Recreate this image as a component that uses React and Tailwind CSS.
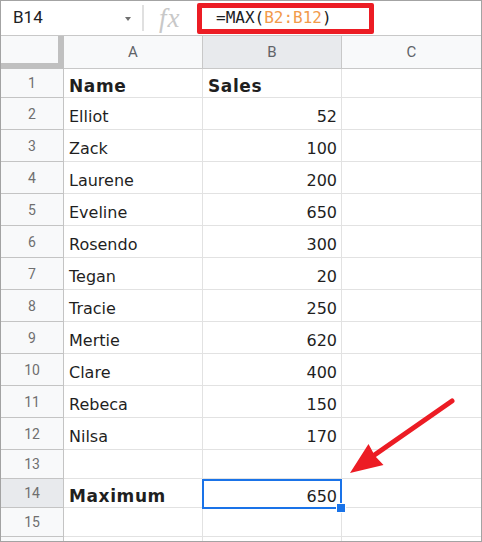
import React from 'react';

const rows = [
  { n: 1, a: 'Name', b: 'Sales', bold: true, h: 'h-[29px]' },
  { n: 2, a: 'Elliot', b: '52', h: 'h-[32px]' },
  { n: 3, a: 'Zack', b: '100', h: 'h-[32px]' },
  { n: 4, a: 'Laurene', b: '200', h: 'h-[32px]' },
  { n: 5, a: 'Eveline', b: '650', h: 'h-[32px]' },
  { n: 6, a: 'Rosendo', b: '300', h: 'h-[32px]' },
  { n: 7, a: 'Tegan', b: '20', h: 'h-[32px]' },
  { n: 8, a: 'Tracie', b: '250', h: 'h-[32px]' },
  { n: 9, a: 'Mertie', b: '620', h: 'h-[32px]' },
  { n: 10, a: 'Clare', b: '400', h: 'h-[32px]' },
  { n: 11, a: 'Rebeca', b: '150', h: 'h-[32px]' },
  { n: 12, a: 'Nilsa', b: '170', h: 'h-[32px]' },
  { n: 13, a: '', b: '', h: 'h-[29px]' },
  { n: 14, a: 'Maximum', b: '650', boldA: true, selected: true, h: 'h-[29px]' },
  { n: 15, a: '', b: '', h: 'h-[29px]' },
  { n: '', a: '', b: '', h: 'h-[5px]', last: true },
];

const cellFont = { fontFamily: '"DejaVu Sans", Verdana, sans-serif' };
const uiFont = { fontFamily: 'Roboto, "Liberation Sans", sans-serif' };

const boldText = 'text-[17px] font-bold tracking-[0.6px]';

function Row({ row }) {
  const base = `flex ${row.h} ${row.last ? '' : 'border-b'} border-[#e2e2e2]`;
  return (
    <div className="grid grid-cols-[63px_139px_139px_139px]">
      <div
        className={`flex ${row.h} items-center justify-center border-r border-[#c4c4c4] ${row.last ? '' : 'border-b'} ${row.selected ? 'bg-[#e8eaed]' : 'bg-[#f8f9fa]'} pt-[1px] text-[14px] text-[#6f6f6f]`}
        style={uiFont}
      >
        {row.n}
      </div>
      <div
        className={`${base} items-center border-r pl-[5px] pt-[6px] leading-[19px] text-[#1f1f1f] ${row.bold || row.boldA ? boldText : 'text-[16px]'}`}
        style={cellFont}
      >
        {row.a}
      </div>
      <div
        className={`${base} relative items-center border-r pt-[6px] leading-[19px] text-[#1f1f1f] ${row.bold ? `justify-start pl-[5px] ${boldText}` : 'justify-end pr-[4px] text-[16px]'}`}
        style={cellFont}
      >
        {row.b}
        {row.selected && (
          <div className="absolute -left-px -right-px top-0 -bottom-[2px] z-10 border-2 border-[#1a73e8]">
            <div className="absolute -right-[5px] -bottom-[5px] h-[8px] w-[8px] bg-[#1a73e8] outline outline-1 outline-white" />
          </div>
        )}
      </div>
      <div className={base} />
    </div>
  );
}

export default function App() {
  return (
    <div className="relative h-[542px] w-[482px] overflow-hidden bg-white">
      <div className="h-[542px] w-[482px] overflow-hidden border border-[#a3a3a3]">
        {/* formula bar */}
        <div className="flex h-[35px] items-center border-b border-[#c8c8c8]">
          <div
            className="flex w-[141px] items-center justify-between pl-[12px] pr-[11px] text-[17px] text-[#202124]"
            style={uiFont}
          >
            <span>B14</span>
            <span className="mt-[1px] h-0 w-0 border-x-[3px] border-t-[4px] border-x-transparent border-t-[#707070]" />
          </div>
          <div className="h-[26px] w-[2px] bg-[#e0e0e0]" />
          <div
            className="ml-[15px] w-[26px] text-[27px] italic leading-none tracking-[1px] text-[#c8c8c8]"
            style={{ fontFamily: '"Liberation Serif", serif' }}
          >
            fx
          </div>
          <div
            className="ml-[12px] flex h-[31px] w-[177px] items-center rounded-[2px] border-[5px] border-[#ec1c24] pl-[14px] text-[16px] text-[#202124]"
            style={{ fontFamily: '"DejaVu Sans Mono", "Liberation Mono", monospace' }}
          >
            =MAX(<span className="text-[#f29a4a]">B2:B12</span>)
          </div>
        </div>

        {/* column header */}
        <div className="grid h-[33px] grid-cols-[63px_139px_139px_139px] text-[15px] text-[#5f6368]" style={uiFont}>
          <div className="border-r-[6px] border-b-[6px] border-[#c0c0c0] bg-[#f8f9fa]" />
          <div className="flex items-center justify-center border-r border-b border-[#c8c8c8] bg-[#f8f9fa]">A</div>
          <div className="flex items-center justify-center border-r border-b border-[#c8c8c8] bg-[#e8eaed]">B</div>
          <div className="flex items-center justify-center border-b border-[#c8c8c8] bg-[#f8f9fa]">C</div>
        </div>

        {rows.map((r, i) => (
          <Row key={i} row={r} />
        ))}
      </div>

      {/* annotation arrow */}
      <svg className="pointer-events-none absolute top-0 left-0 z-20" width="482" height="542" viewBox="0 0 482 542">
        <line x1="452" y1="401" x2="373" y2="456" stroke="#ec1c24" strokeWidth="5" strokeLinecap="round" />
        <polygon points="350,473 368.5,444 375,456 383.5,465" fill="#ec1c24" />
      </svg>
    </div>
  );
}
